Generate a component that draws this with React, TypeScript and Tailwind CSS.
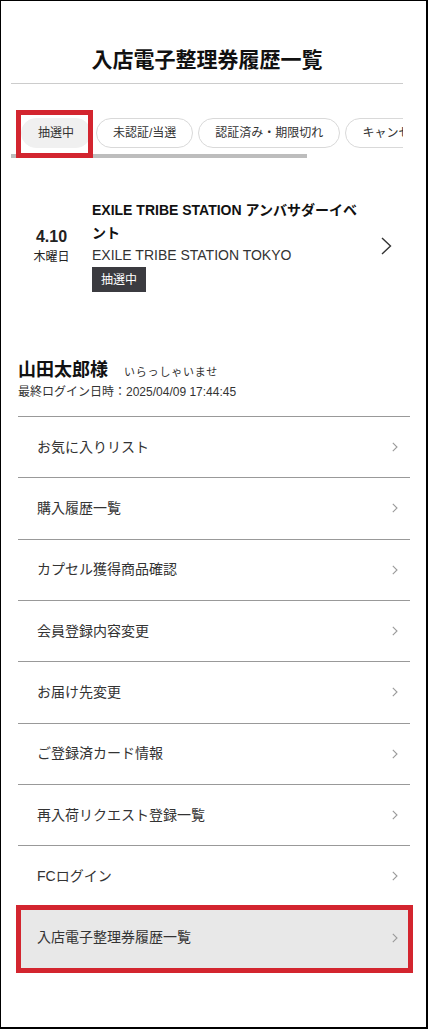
import React from "react";

const font = { fontFamily: '"Liberation Sans", "Noto Sans CJK JP", sans-serif' };

const tabs = ["抽選中", "未認証/当選", "認証済み・期限切れ", "キャンセル済み"];

const menu = [
  "お気に入りリスト",
  "購入履歴一覧",
  "カプセル獲得商品確認",
  "会員登録内容変更",
  "お届け先変更",
  "ご登録済カード情報",
  "再入荷リクエスト登録一覧",
  "FCログイン",
];

function SmallChevron() {
  return (
    <svg width="6" height="10" viewBox="0 0 6 10" fill="none" className="shrink-0">
      <polyline points="0.8,0.8 5,5 0.8,9.2" stroke="#9a9a9a" strokeWidth="1.1" />
    </svg>
  );
}

export default function App() {
  return (
    <div
      className="w-[428px] h-[1029px] bg-white border-l border-t border-r-2 border-b-2 border-black overflow-hidden text-[#333]"
      style={font}
    >
      {/* ヘッダー */}
      <div className="ml-[10px] w-[392px] pt-[43px] pb-[7px] border-b border-[#cccccc]">
        <h1 className="text-center text-[21px] leading-[32px] font-bold text-[#111]">入店電子整理券履歴一覧</h1>
      </div>

      {/* タブ */}
      <div className="relative ml-[10px] w-[392px] mt-[34px]">
        <div className="flex gap-[5px] pl-[10px] overflow-hidden">
          {tabs.map((t, i) => (
            <div
              key={t}
              className={
                i === 0
                  ? "shrink-0 h-[30px] px-4 flex items-center rounded-full bg-[#f0f0f0] border border-[#f0f0f0] text-[12px]"
                  : "shrink-0 h-[30px] px-4 flex items-center rounded-full border border-[#d9d9d9] text-[12px]"
              }
            >
              {t}
            </div>
          ))}
        </div>
        <div className="mt-[6px] w-[296px] h-[4px] bg-[#bdbdbd]" />
        <div className="absolute left-[5px] top-[-8px] w-[77px] h-[48px] border-[5px] border-[#d3252f]" />
      </div>

      {/* イベント */}
      <div className="ml-[10px] mt-[41px] flex items-center">
        <div className="w-[81px] shrink-0 flex flex-col items-center text-[#222]">
          <div className="text-[16px] leading-[22px] font-bold">4.10</div>
          <div className="text-[12px] leading-[18px]">木曜日</div>
        </div>
        <div className="w-[274px] shrink-0">
          <div className="text-[14px] leading-[23px] font-bold text-[#111]">EXILE TRIBE STATION アンバサダーイベント</div>
          <div className="text-[14px] leading-[21px]">EXILE TRIBE STATION TOKYO</div>
          <div className="mt-[1px] inline-flex items-center h-[25px] px-[9px] bg-[#3b3b40] text-white text-[12px]">抽選中</div>
        </div>
        <svg width="11" height="18" viewBox="0 0 11 18" fill="none" className="ml-[15px] shrink-0">
          <polyline points="1,1 9.5,9 1,17" stroke="#333" strokeWidth="1.4" />
        </svg>
      </div>

      {/* ユーザー */}
      <div className="ml-[17px] mt-[65px]">
        <div className="flex items-baseline">
          <span className="text-[18px] leading-[26px] font-bold text-[#111]">山田太郎様</span>
          <span className="ml-[16px] text-[11px] tracking-[0.8px]">いらっしゃいませ</span>
        </div>
        <div className="text-[12px] leading-[18px]">最終ログイン日時：2025/04/09 17:44:45</div>
      </div>

      {/* メニュー */}
      <div className="ml-[17px] w-[392px] mt-[15px]">
        {menu.map((m) => (
          <div key={m} className="h-[61.33px] border-t border-[#999] flex items-center justify-between pl-[19px] pr-[12px]">
            <span className="text-[14px]">{m}</span>
            <SmallChevron />
          </div>
        ))}
        <div className="relative h-[62px] bg-[#e8e8e8] flex items-center justify-between pl-[19px] pr-[12px]">
          <span className="text-[14px]">入店電子整理券履歴一覧</span>
          <SmallChevron />
          <div className="absolute left-[-2px] right-[-3px] top-[-2px] bottom-[-4px] border-[5px] border-[#d3252f]" />
        </div>
      </div>
    </div>
  );
}
